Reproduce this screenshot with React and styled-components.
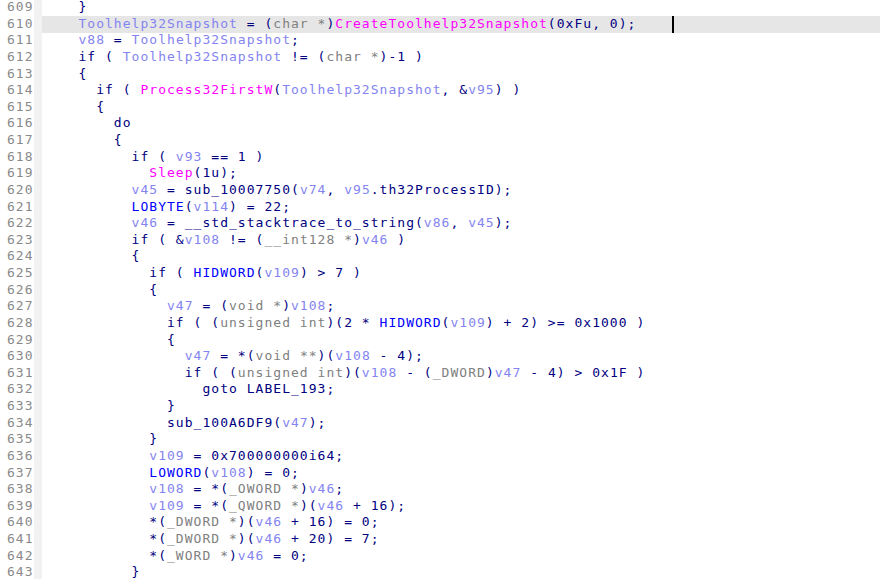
import React from "react";
import styled, { createGlobalStyle } from "styled-components";

const GlobalStyle = createGlobalStyle`
  html, body {
    margin: 0;
    padding: 0;
    background: #ffffff;
    overflow: hidden;
  }
`;

const LINES = [
  "    }",
  "    [[v:Toolhelp32Snapshot]] = ([[t:char *]])[[f:CreateToolhelp32Snapshot]](0xFu, 0);    ",
  "    [[v:v88]] = [[v:Toolhelp32Snapshot]];",
  "    if ( [[v:Toolhelp32Snapshot]] != ([[t:char *]])-1 )",
  "    {",
  "      if ( [[f:Process32FirstW]]([[v:Toolhelp32Snapshot]], &[[v:v95]]) )",
  "      {",
  "        do",
  "        {",
  "          if ( [[v:v93]] == 1 )",
  "            [[f:Sleep]](1u);",
  "          [[v:v45]] = sub_10007750([[v:v74]], [[v:v95]].th32ProcessID);",
  "          [[m:LOBYTE]]([[v:v114]]) = 22;",
  "          [[v:v46]] = __std_stacktrace_to_string([[v:v86]], [[v:v45]]);",
  "          if ( &[[v:v108]] != ([[t:__int128 *]])[[v:v46]] )",
  "          {",
  "            if ( [[m:HIDWORD]]([[v:v109]]) > 7 )",
  "            {",
  "              [[v:v47]] = ([[t:void *]])[[v:v108]];",
  "              if ( ([[t:unsigned int]])(2 * [[m:HIDWORD]]([[v:v109]]) + 2) >= 0x1000 )",
  "              {",
  "                [[v:v47]] = *([[t:void **]])([[v:v108]] - 4);",
  "                if ( ([[t:unsigned int]])([[v:v108]] - ([[t:_DWORD]])[[v:v47]] - 4) > 0x1F )",
  "                  goto LABEL_193;",
  "              }",
  "              sub_100A6DF9([[v:v47]]);",
  "            }",
  "            [[v:v109]] = 0x700000000i64;",
  "            [[m:LOWORD]]([[v:v108]]) = 0;",
  "            [[v:v108]] = *([[t:_OWORD *]])[[v:v46]];",
  "            [[v:v109]] = *([[t:_QWORD *]])([[v:v46]] + 16);",
  "            *([[t:_DWORD *]])([[v:v46]] + 16) = 0;",
  "            *([[t:_DWORD *]])([[v:v46]] + 20) = 7;",
  "            *([[t:_WORD *]])[[v:v46]] = 0;",
  "          }",
];

const FIRST_LINE = 609;
const CURRENT_LINE = 610;

const COLORS = {
  n: "#000080",
  v: "#8484f0",
  f: "#ff00ff",
  t: "#808080",
  m: "#0000ff",
};

const parseLine = (src) => {
  const parts = [];
  const re = /\[\[(\w):([^\]]*)\]\]/g;
  let last = 0;
  let m;
  while ((m = re.exec(src))) {
    if (m.index > last) parts.push({ kind: "n", text: src.slice(last, m.index) });
    parts.push({ kind: m[1], text: m[2] });
    last = re.lastIndex;
  }
  if (last < src.length) parts.push({ kind: "n", text: src.slice(last) });
  return parts;
};

const App = () => {
  return (
    <>
      <GlobalStyle />
      <Editor>
        {LINES.map((src, i) => {
          const num = FIRST_LINE + i;
          const current = num === CURRENT_LINE;
          return (
            <Row key={num}>
              <LineNo>{num}</LineNo>
              <Strip />
              <Code $current={current}>
                {parseLine(src).map((p, j) => (
                  <Tok key={j} $kind={p.kind}>
                    {p.text}
                  </Tok>
                ))}
                {current && <Caret />}
              </Code>
            </Row>
          );
        })}
      </Editor>
    </>
  );
};

const Editor = styled.div`
  width: 880px;
  height: 579px;
  overflow: hidden;
  background: #ffffff;
  font-family: "DejaVu Sans Mono", "Liberation Mono", monospace;
  font-size: 13px;
  letter-spacing: 1.03px;
  & > :first-child {
    margin-top: -1px;
  }
`;

const Row = styled.div`
  display: grid;
  grid-template-columns: 34px 8px 1fr;
  height: 16.625px;
  line-height: 16.625px;
`;

const LineNo = styled.div`
  padding-left: 7px;
  color: #8a8a8a;
  white-space: pre;
`;

const Strip = styled.div`
  background: #f2f2f2;
`;

const Code = styled.div`
  padding-left: 1px;
  white-space: pre;
  color: #000080;
  background: ${(p) => (p.$current ? "#e6e6e6" : "transparent")};
`;

const Tok = styled.span`
  color: ${(p) => COLORS[p.$kind]};
`;

const Caret = styled.span`
  display: inline-block;
  width: 2px;
  height: 17px;
  background: #000000;
  vertical-align: top;
`;

export default App;
